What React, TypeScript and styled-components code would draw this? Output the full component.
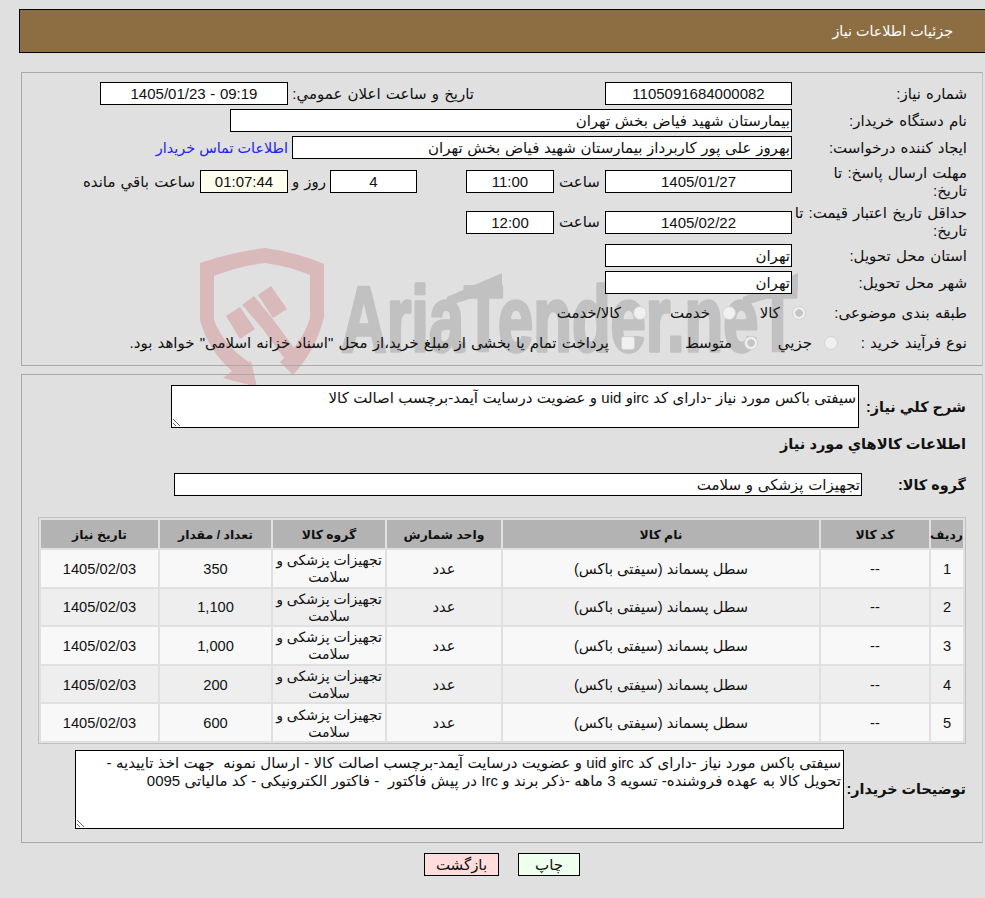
import React from "react";
import styled, { createGlobalStyle } from "styled-components";

const Global = createGlobalStyle`
  html, body { margin: 0; padding: 0; background: #e0e0e0; }
  body { font-family: "Liberation Sans", "DejaVu Sans", sans-serif; font-size: 15px; word-spacing: 1px; color: #111; }
`;

const Page = styled.div`
  position: relative;
  isolation: isolate;
  width: 985px;
  height: 898px;
  overflow: hidden;
  direction: rtl;
  background: #e0e0e0;
`;

const Watermark = styled.svg`
  position: absolute;
  left: 190px;
  top: 240px;
  z-index: -1;
  direction: ltr;
`;

const Header = styled.header`
  margin: 9px -1px 0 19px;
  height: 42px;
  display: flex;
  align-items: center;
  padding-right: 32px;
  background: #8d6e43;
  border: 1px solid #000;
  color: #fff;
  font-size: 14.3px;
  word-spacing: 0;
`;

const Panel = styled.section<{ $top: number; $pr: number; $pt: number; $h: number }>`
  box-sizing: border-box;
  margin: ${(p) => p.$top}px 2px 0 21px;
  height: ${(p) => p.$h}px;
  padding: ${(p) => p.$pt}px ${(p) => p.$pr}px 0 16px;
  border: 1px solid #a9a9a9;
  border-color: #a9a9a9 #c4c4c4 #a9a9a9 #a9a9a9;
  display: flex;
  flex-direction: column;
`;

const Row = styled.div<{ $h?: number; $mt?: number }>`
  display: flex;
  align-items: center;
  height: ${(p) => p.$h ?? 23}px;
  margin-top: ${(p) => p.$mt ?? 4}px;
  flex: none;
`;

const Label = styled.label<{ $w?: number }>`
  flex: none;
  width: ${(p) => p.$w ?? 175}px;
  line-height: 18px;
`;

const BoldLabel = styled(Label)`
  font-size: 14.4px;
  font-weight: bold;
  word-spacing: 0;
`;

const Caption = styled.span<{ $w?: number; $before?: number; $center?: boolean }>`
  flex: none;
  width: ${(p) => (p.$w ? `${p.$w}px` : "auto")};
  margin-right: ${(p) => p.$before ?? 0}px;
  text-align: ${(p) => (p.$center ? "center" : "right")};
  white-space: nowrap;
`;

const Field = styled.input<{ $w: number; $before?: number; $tint?: string; $center?: boolean; $ltr?: boolean }>`
  flex: none;
  box-sizing: border-box;
  width: ${(p) => p.$w}px;
  height: 23px;
  margin: 0 ${(p) => p.$before ?? 0}px 0 0;
  padding: 0 1px;
  border: 1px solid #000;
  border-radius: 0;
  outline: none;
  background: ${(p) => p.$tint ?? "#fff"};
  font: inherit;
  word-spacing: 0.5px;
  color: #111;
  direction: ${(p) => (p.$ltr ? "ltr" : "rtl")};
  text-align: ${(p) => (p.$center ? "center" : "right")};
`;

const Contact = styled.a`
  flex: none;
  margin-right: 4px;
  color: #2222ee;
  font-size: 14.4px;
  word-spacing: 0;
  text-decoration: none;
`;

const Option = styled.span<{ $w?: number }>`
  flex: none;
  display: flex;
  align-items: center;
  gap: 12px;
  width: ${(p) => (p.$w ? `${p.$w}px` : "auto")};
  white-space: nowrap;
`;

const Radio = styled.span<{ $on?: boolean; $square?: boolean }>`
  flex: none;
  box-sizing: border-box;
  width: 14px;
  height: 14px;
  border-radius: ${(p) => (p.$square ? "3px" : "50%")};
  border: 1px solid #d2d2d2;
  background: ${(p) =>
    p.$on ? "radial-gradient(circle, #c4c4c4 0 3.5px, #f0f0f0 4px)" : "#f0f0f0"};
`;

const Notes = styled.textarea<{ $w: number; $h: number }>`
  flex: none;
  box-sizing: border-box;
  width: ${(p) => p.$w}px;
  height: ${(p) => p.$h}px;
  margin: 0;
  padding: 3px 2px 1px;
  border: 1px solid #000;
  border-radius: 0;
  outline: none;
  background: #fff;
  font: inherit;
  word-spacing: 0.2px;
  line-height: 18px;
  color: #111;
  direction: rtl;
  resize: vertical;
`;

const Title = styled.h2`
  margin: 0;
  font-size: 14.67px;
  font-weight: bold;
  word-spacing: 0;
`;

const GridBox = styled.div`
  flex: none;
  box-sizing: border-box;
  width: 928px;
  margin-top: 21px;
  border: 1px solid #c0c0c0;
  padding: 0;
`;

const Grid = styled.table`
  width: 100%;
  table-layout: fixed;
  border-collapse: separate;
  border-spacing: 2px;
  font-size: 14.67px;
  word-spacing: 0;
`;

const Th = styled.th<{ $w: number }>`
  width: ${(p) => p.$w}px;
  height: 28px;
  padding: 0;
  background: #b3b3b3;
  font-size: 12.4px;
  font-weight: bold;
  text-align: center;
`;

const Tr = styled.tr<{ $alt: boolean }>`
  background: ${(p) => (p.$alt ? "#eeeeee" : "#f8f8f8")};
`;

const Td = styled.td`
  height: 36.6px;
  padding: 2px 0 0;
  box-sizing: border-box;
  line-height: 17px;
  text-align: center;
`;

const GroupTd = styled(Td)`
  font-size: 14px;
`;

const Actions = styled.div`
  display: flex;
  justify-content: center;
  gap: 19px;
  margin: 10px 0 0 19px;
`;

const Action = styled.button<{ $tint: string; $w: number }>`
  box-sizing: border-box;
  width: ${(p) => p.$w}px;
  height: 23px;
  padding: 0;
  border: 1px solid #000;
  border-radius: 0;
  background: ${(p) => p.$tint};
  font: inherit;
  color: #111;
`;

const rows = [
  ["1", "350"],
  ["2", "1,100"],
  ["3", "1,000"],
  ["4", "200"],
  ["5", "600"],
];

const summary = "سیفتی باکس مورد نیاز -دارای کد ircو uid و عضویت درسایت آیمد-برچسب اصالت کالا";
const buyerNotes =
  "سیفتی باکس مورد نیاز -دارای کد ircو uid و عضویت درسایت آیمد-برچسب اصالت کالا - ارسال نمونه  جهت اخذ تاییدیه - تحویل کالا به عهده فروشنده- تسویه 3 ماهه -ذکر برند و Irc در پیش فاکتور  - فاکتور الکترونیکی - کد مالیاتی 0095";

export default function App() {
  return (
    <Page>
      <Global />
      <Watermark width="620" height="190" viewBox="190 240 620 190" aria-hidden="true">
        <path
          fill="#d9b9b9"
          fillRule="evenodd"
          d="M200 263 Q232 252 265 248 Q296 252 324 264 L324 317 Q316 350 293 375 L280 362 Q303 342 310 318 L310 275 Q288 266 265 263 Q240 266 214 276 L214 320 Q224 346 249 362 L251 361 L257 387 L223 378 L232 371 Q208 350 200 320 Z"
        />
        <path fill="#d9b9b9" d="M226 316 L240 307 L255 329 L240 339 Z M258 295 L271 286 L287 309 L273 318 Z" />
        <path fill="#d9b9b9" d="M242 305 L254 296 L272 318 L297 352 L287 362 L262 328 Z" />
        <text
          x="341"
          y="351"
          textLength="456"
          lengthAdjust="spacingAndGlyphs"
          fill="#c1c1c1"
          stroke="#c1c1c1"
          strokeWidth="3.5"
          strokeLinejoin="round"
          fontFamily="'Liberation Sans', sans-serif"
          fontWeight="bold"
          fontSize="92"
        >
          AriaTender.neT
        </text>
        <path fill="#c1c1c1" d="M447 297 L502 273 L502 289 L447 306 Z M743 297 L798 273 L798 289 L743 306 Z" />
      </Watermark>

      <Header>جزئیات اطلاعات نیاز</Header>

      <Panel $top={19} $pr={15} $pt={9} $h={294}>
        <Row $mt={0}>
          <Label>شماره نیاز:</Label>
          <Field $w={187} $center readOnly value="1105091684000082" />
          <Caption $before={131} $w={181}>تاریخ و ساعت اعلان عمومي:</Caption>
          <Field $w={188} $before={5} $center $ltr readOnly value="1405/01/23 - 09:19" />
        </Row>
        <Row>
          <Label>نام دستگاه خریدار:</Label>
          <Field $w={562} readOnly value="بیمارستان شهید فیاض بخش تهران" />
        </Row>
        <Row>
          <Label>ایجاد کننده درخواست:</Label>
          <Field $w={500} readOnly value="بهروز علی پور کاربرداز بیمارستان شهید فیاض بخش تهران" />
          <Contact href="#">اطلاعات تماس خریدار</Contact>
        </Row>
        <Row $h={37}>
          <Label>مهلت ارسال پاسخ: تا<br />تاریخ:</Label>
          <Field $w={187} $center readOnly value="1405/01/27" />
          <Caption $w={51} $center>ساعت</Caption>
          <Field $w={88} $center readOnly value="11:00" />
          <Field $w={87} $before={49} $center readOnly value="4" />
          <Caption $w={42} $center>روز و</Caption>
          <Field $w={88} $center $tint="#ffffee" readOnly value="01:07:44" />
          <Caption $before={5}>ساعت باقي مانده</Caption>
        </Row>
        <Row $h={36}>
          <Label>حداقل تاریخ اعتبار قیمت: تا<br />تاریخ:</Label>
          <Field $w={187} $center readOnly value="1405/02/22" />
          <Caption $w={51} $center>ساعت</Caption>
          <Field $w={88} $center readOnly value="12:00" />
        </Row>
        <Row>
          <Label>استان محل تحویل:</Label>
          <Field $w={187} readOnly value="تهران" />
        </Row>
        <Row>
          <Label>شهر محل تحویل:</Label>
          <Field $w={187} readOnly value="تهران" />
        </Row>
        <Row $h={30}>
          <Label $w={161}>طبقه بندی موضوعی:</Label>
          <Option $w={70}><Radio $on />کالا</Option>
          <Option $w={89}><Radio />خدمت</Option>
          <Option><Radio />کالا/خدمت</Option>
        </Row>
        <Row $h={22}>
          <Label $w={129}>نوع فرآیند خرید :</Label>
          <Option $w={80}><Radio />جزیي</Option>
          <Option $w={123}><Radio $on />متوسط</Option>
          <Option><Radio $square />پرداخت تمام یا بخشی از مبلغ خرید،از محل "اسناد خزانه اسلامی" خواهد بود.</Option>
        </Row>
      </Panel>

      <Panel $top={8} $pr={16} $pt={10} $h={469}>
        <Row $h={43} $mt={0}>
          <BoldLabel $w={107}>شرح کلي نیاز:</BoldLabel>
          <Notes $w={688} $h={43} readOnly defaultValue={summary} />
        </Row>
        <Row $mt={4}>
          <Title>اطلاعات کالاهاي مورد نیاز</Title>
        </Row>
        <Row $mt={18}>
          <BoldLabel $w={104}>گروه کالا:</BoldLabel>
          <Field $w={688} readOnly value="تجهیزات پزشکی و سلامت" />
        </Row>
        <GridBox>
          <Grid>
            <thead>
              <tr>
                <Th $w={32}>ردیف</Th>
                <Th $w={108}>کد کالا</Th>
                <Th $w={316}>نام کالا</Th>
                <Th $w={114}>واحد شمارش</Th>
                <Th $w={112}>گروه کالا</Th>
                <Th $w={111}>تعداد / مقدار</Th>
                <Th $w={117}>تاریخ نیاز</Th>
              </tr>
            </thead>
            <tbody>
              {rows.map(([n, qty], i) => (
                <Tr key={n} $alt={i % 2 === 1}>
                  <Td>{n}</Td>
                  <Td>--</Td>
                  <Td>سطل پسماند (سیفتی باکس)</Td>
                  <Td>عدد</Td>
                  <GroupTd>تجهیزات پزشکی و سلامت</GroupTd>
                  <Td>{qty}</Td>
                  <Td>1405/02/03</Td>
                </Tr>
              ))}
            </tbody>
          </Grid>
        </GridBox>
        <Row $h={79} $mt={6}>
          <BoldLabel $w={122}>توضیحات خریدار:</BoldLabel>
          <Notes $w={769} $h={79} readOnly defaultValue={buyerNotes} />
        </Row>
      </Panel>

      <Actions>
        <Action $tint="#eeffee" $w={62}>چاپ</Action>
        <Action $tint="#ffdddd" $w={75}>بازگشت</Action>
      </Actions>
    </Page>
  );
}
